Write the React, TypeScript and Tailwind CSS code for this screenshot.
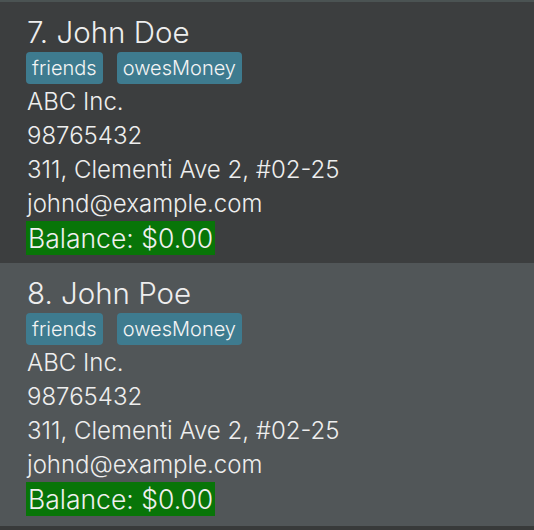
import React from 'react';

const people = [
  { idx: 7, name: 'John Doe', bg: 'bg-[#3c3e3f]', h: 'h-[261px]' },
  { idx: 8, name: 'John Poe', bg: 'bg-[#515658]', h: 'h-[263px]' },
];

const tags = ['friends', 'owesMoney'];

const PersonCard = ({ idx, name, bg, h }: { idx: number; name: string; bg: string; h: string }) => (
  <div className={`${bg} ${h} flex flex-col pl-[27px] pt-[13px] text-[#eeeeee] font-light`}>
    <div className="text-[29.5px] leading-[34px]">
      {idx}. {name}
    </div>
    <div className="flex gap-[14px] mt-[3px] ml-[-1px]">
      {tags.map((t) => (
        <span key={t} className="bg-[#3e7b8f] text-[#f4f4f4] text-[20px] leading-[32px] px-[6px] rounded-[4px]">
          {t}
        </span>
      ))}
    </div>
    <div className="text-[24px] leading-[34px] mt-[1px]">
      <div>ABC Inc.</div>
      <div>98765432</div>
      <div>311, Clementi Ave 2, #02-25</div>
      <div>johnd@example.com</div>
    </div>
    <div className="self-start bg-[#087508] text-[#f0f0f0] text-[26.5px] leading-[34px] px-[2px] ml-[-1px]">
      Balance: $0.00
    </div>
  </div>
);

export default function App() {
  return (
    <div className="w-[534px] h-[530px] bg-[#383a3a] font-['Inter',sans-serif]">
      <div className="h-[2px] bg-[#4b5353]" />
      {people.map((p) => (
        <PersonCard key={p.idx} {...p} />
      ))}
    </div>
  );
}
